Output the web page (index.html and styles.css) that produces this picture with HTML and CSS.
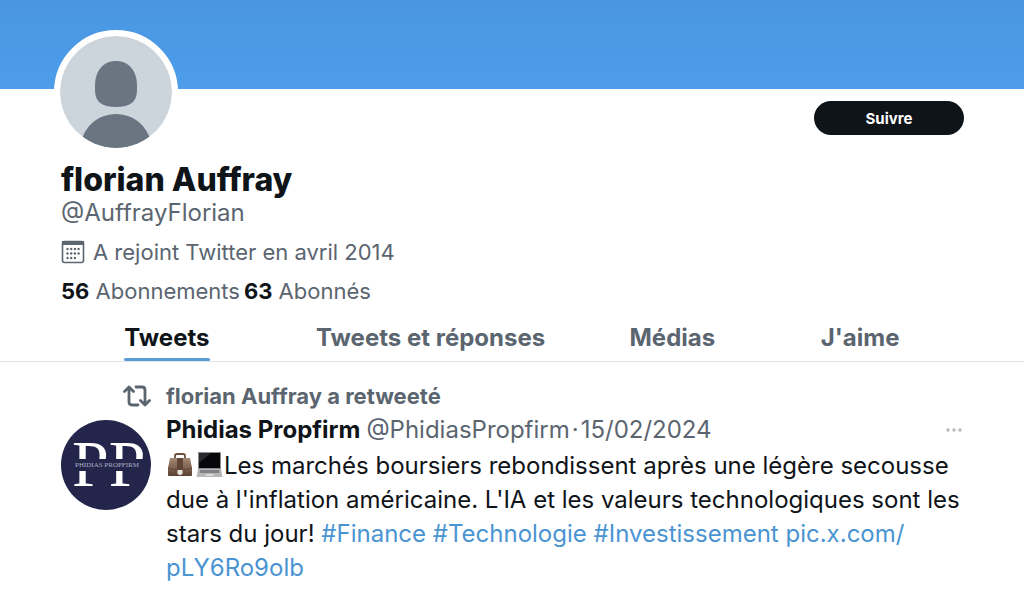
FILE: index.html
```html
<!DOCTYPE html>
<html lang="fr">
<head>
  <meta charset="utf-8">
  <meta content="width=device-width, initial-scale=1.0" name="viewport">
  <title>florian Auffray (@AuffrayFlorian)</title>
  <link rel="stylesheet" href="styles.css">
</head>
<body>
  <div class="banner"></div>

  <header class="profile">
    <div class="profile-top">
      <svg class="avatar" viewBox="0 0 112 112" role="img" aria-label="florian Auffray">
        <defs>
          <clipPath id="round"><circle cx="56" cy="56" r="56"/></clipPath>
        </defs>
        <g clip-path="url(#round)">
          <rect width="112" height="112" fill="#cdd5dc"/>
          <path d="M56 25c13 0 21 10 21 25v4c0 12-7 17-21 17s-21-5-21-17v-4c0-15 8-25 21-25z" fill="#697682"/>
          <path d="M20 112c2-20 17-34 36-34s34 14 36 34z" fill="#697682"/>
        </g>
      </svg>
      <button class="follow" type="button">Suivre</button>
    </div>
    <h1>florian Auffray</h1>
    <p class="handle">@AuffrayFlorian</p>
    <p class="joined">
      <svg class="calendar" viewBox="0 0 24 24" aria-hidden="true">
        <rect x="1.500" y="1.500" width="21" height="21" rx="2" fill="none" stroke="currentColor" stroke-width="1.600"/>
        <path d="M1 3h22" stroke="currentColor" stroke-width="4"/>
        <g fill="currentColor">
          <circle cx="6.500" cy="9" r="1.200"/><circle cx="10.200" cy="9" r="1.200"/><circle cx="13.900" cy="9" r="1.200"/><circle cx="17.600" cy="9" r="1.200"/>
          <circle cx="6.500" cy="13.500" r="1.200"/><circle cx="10.200" cy="13.500" r="1.200"/><circle cx="13.900" cy="13.500" r="1.200"/><circle cx="17.600" cy="13.500" r="1.200"/>
          <circle cx="6.500" cy="18" r="1.200"/><circle cx="10.200" cy="18" r="1.200"/><circle cx="13.900" cy="18" r="1.200"/>
        </g>
      </svg>
      A rejoint Twitter en avril 2014
    </p>
    <p class="counts">
      <span><b>56</b> Abonnements</span>
      <span><b>63</b> Abonnés</span>
    </p>
  </header>

  <nav class="tabs">
    <a class="active" href="#tweets">Tweets</a>
    <a href="#replies">Tweets et réponses</a>
    <a href="#media">Médias</a>
    <a href="#likes">J'aime</a>
  </nav>

  <article class="tweet">
    <svg class="retweet-icon" viewBox="0 0 28 22" aria-hidden="true">
      <path d="M1.500 6.500L6 2l4.500 4.500M6 2.500V17q0 3 3 3h6M13 2h6q3 0 3 3v14.500M17.500 15.500L22 20l4.500-4.500" fill="none" stroke="currentColor" stroke-width="2.800" stroke-linecap="round" stroke-linejoin="round"/>
    </svg>
    <p class="retweeted">florian Auffray a retweeté</p>

    <svg class="logo" viewBox="0 0 90 90" role="img" aria-label="Phidias Propfirm">
      <circle cx="45" cy="45" r="45" fill="#23254a"/>
      <text class="logo-letters" x="11" y="66">PP</text>
      <rect x="8" y="39" width="74" height="12" fill="#23254a"/>
      <text class="logo-name" x="46" y="47">PHIDIAS PROPFIRM</text>
    </svg>
    <div class="content">
      <div class="author">
        <b>Phidias Propfirm</b>
        <span class="meta">
          <span>@PhidiasPropfirm</span>
          <span>·</span>
          <time datetime="2024-02-15">15/02/2024</time>
        </span>
        <button class="more" type="button" aria-label="Plus">
          <svg viewBox="0 0 16 4"><circle cx="2" cy="2" r="1.700"/><circle cx="8" cy="2" r="1.700"/><circle cx="14" cy="2" r="1.700"/></svg>
        </button>
      </div>
      <p class="text">
        <svg class="emoji" viewBox="0 0 28 28" role="img" aria-label="porte-documents">
          <defs>
            <linearGradient id="leather" x2="0" y2="1">
              <stop offset="0" stop-color="#a58a76"/>
              <stop offset="1" stop-color="#59402f"/>
            </linearGradient>
          </defs>
          <path d="M9 7V5q0-2 2-2h6q2 0 2 2v2" fill="none" stroke="#6b4f39" stroke-width="1.800"/>
          <path d="M4 7h20l2 10v7q0 1-1 1H3q-1 0-1-1v-7z" fill="url(#leather)"/>
          <path d="M2 17q12 4 24 0" fill="none" stroke="#5a4232" stroke-width=".7"/>
          <path d="M11 7h6v12h-6z" fill="#5f4533"/>
          <path d="M11.500 19h5v4q-2.500 2-5 0z" fill="#e9e4dc"/>
        </svg><svg class="emoji" viewBox="0 0 28 28" role="img" aria-label="ordinateur portable">
          <path d="M3 1h23v18H3z" fill="#8d8d90"/>
          <path d="M4 2h21v15H4z" fill="#08080a"/>
          <path d="M4 2h12L4 12z" fill="#29292d"/>
          <path d="M3 18h23l1.500 8H1.500z" fill="#b8b8bb"/>
          <path d="M5 19h19l.6 3H4.400z" fill="#808085"/>
          <path d="M11 23h7l.4 2h-7.800z" fill="#d8d8da"/>
        </svg>Les marchés boursiers rebondissent après une légère secousse due à l'inflation américaine. L'IA et les valeurs technologiques sont les stars du jour! <a href="#finance">#Finance</a> <a href="#technologie">#Technologie</a> <a href="#investissement">#Investissement</a> <a href="#pic">pic.x.com/<wbr>pLY6Ro9olb</a>
      </p>
    </div>
  </article>
</body>
</html>
```
FILE: styles.css
```css
body {
  margin: 0;
  background: #fff;
  color: #0f1419;
  font-family: Inter, "Liberation Sans", sans-serif;
  font-size: 24px;
  line-height: 34px;
}

h1, p {
  margin: 0;
}

a {
  color: #4a94d2;
  text-decoration: none;
}

button {
  border: 0;
  padding: 0;
  font-family: inherit;
  cursor: pointer;
}

.banner {
  height: 89px;
  background: linear-gradient(#4a96e0, #4d9deb);
}

.profile {
  padding: 0 60px 0 61px;
  color: #5b6570;
}

.profile-top {
  display: flex;
  justify-content: space-between;
}

.avatar {
  width: 112px;
  height: 112px;
  margin: -59px 0 0 -7px;
  border: 6px solid #fff;
  border-radius: 50%;
  background: #fff;
}

.follow {
  width: 150px;
  height: 34px;
  margin-top: 12px;
  border-radius: 17px;
  background: #0f1419;
  color: #fff;
  font-size: 15px;
  font-weight: 700;
}

h1 {
  margin-top: 8px;
  color: #0f1419;
  font-size: 32px;
  font-weight: 800;
  line-height: 36px;
}

.handle {
  line-height: 30px;
}

.joined {
  display: flex;
  align-items: center;
  gap: 8px;
  margin-top: 7px;
  font-size: 22px;
}

.calendar {
  width: 24px;
  height: 24px;
}

.counts {
  display: flex;
  gap: 4px;
  margin-top: 5px;
  font-size: 22px;
}

.counts b {
  color: #0f1419;
}

.tabs {
  display: grid;
  grid-template-columns: 53fr 79fr 42fr 52fr;
  justify-items: center;
  margin-top: 10px;
  padding: 0 60px 0 61px;
  border-bottom: 1px solid #e1e5e8;
}

.tabs a {
  padding-top: 3px;
  color: #5b6570;
  font-weight: 700;
}

.tabs a::after {
  content: "";
  display: block;
  height: 3px;
  margin-top: 3px;
  border-radius: 2px;
}

.tabs .active {
  color: #0f1419;
}

.tabs .active::after {
  background: #5b9bd5;
}

.tweet {
  display: grid;
  grid-template-columns: 90px 1fr;
  column-gap: 15px;
  padding: 17px 60px 0 61px;
}

.retweet-icon {
  width: 28px;
  height: 22px;
  align-self: center;
  justify-self: end;
  color: #5b6570;
}

.retweeted {
  color: #5b6570;
  font-size: 22px;
  font-weight: 700;
}

.logo {
  width: 90px;
  height: 90px;
  margin-top: 7px;
}

.logo-letters {
  fill: #fff;
  font-family: "Liberation Serif", serif;
  font-size: 66px;
}

.logo-name {
  fill: #aeb0c6;
  font-family: "Liberation Serif", serif;
  font-size: 7px;
  text-anchor: middle;
}

.author {
  display: flex;
  gap: 6px;
  color: #5b6570;
}

.author b {
  color: #0f1419;
}

.meta {
  display: flex;
  gap: 2px;
}

.more {
  margin-left: auto;
  padding: 0 2px;
  background: none;
}

.more svg {
  display: block;
  width: 16px;
  height: 4px;
  fill: #b4b9be;
}

.text {
  margin-top: 2px;
}

.emoji {
  width: 28px;
  height: 28px;
  margin-right: 1px;
  vertical-align: -5px;
}
```
